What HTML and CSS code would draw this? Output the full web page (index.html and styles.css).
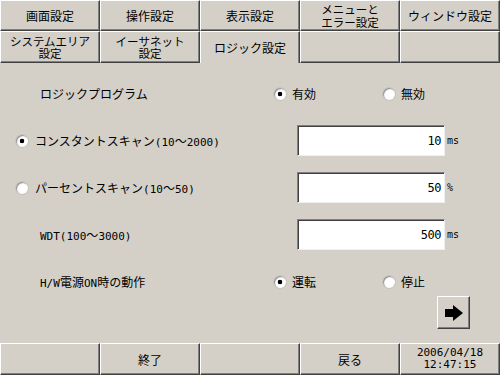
FILE: index.html
```html
<!DOCTYPE html>
<html lang="ja">
<head>
    <meta charset="UTF-8">
    <title>ロジック設定</title>
    <link rel="stylesheet" href="styles.css">
</head>
<body>
    <div class="screen">
        <div class="tabs">
            <div class="tab">画面設定</div>
            <div class="tab">操作設定</div>
            <div class="tab">表示設定</div>
            <div class="tab two">メニューと<br>エラー設定</div>
            <div class="tab">ウィンドウ設定</div>
            <div class="tab two">システムエリア<br>設定</div>
            <div class="tab two">イーサネット<br>設定</div>
            <div class="tab active">ロジック設定</div>
            <div class="tab"></div>
            <div class="tab"></div>
        </div>

        <div class="panel">
            <div class="rows">
                <div class="row">
                    <div class="label plain">ロジックプログラム</div>
                    <div class="opt"><span class="radio on"></span>有効</div>
                    <div class="opt"><span class="radio"></span>無効</div>
                </div>
                <div class="row field">
                    <div class="label"><span class="radio on"></span><span>コンスタントスキャン<span class="en">(10</span>～<span class="en">2000)</span></span></div>
                    <div class="box">10</div>
                    <span class="unit">ms</span>
                </div>
                <div class="row field">
                    <div class="label"><span class="radio"></span><span>パーセントスキャン<span class="en">(10</span>～<span class="en">50)</span></span></div>
                    <div class="box">50</div>
                    <span class="unit">%</span>
                </div>
                <div class="row field">
                    <div class="label plain"><span><span class="en">WDT(100</span>～<span class="en">3000)</span></span></div>
                    <div class="box">500</div>
                    <span class="unit">ms</span>
                </div>
                <div class="row">
                    <div class="label plain"><span><span class="en">H/W</span>電源<span class="en">ON</span>時の動作</span></div>
                    <div class="opt"><span class="radio on"></span>運転</div>
                    <div class="opt"><span class="radio"></span>停止</div>
                </div>
            </div>
            <div class="next">
                <button class="arrow">
                    <svg width="18" height="16" viewBox="0 0 18 16"><path d="M0 4H8V0L18 8L8 16V12H0Z" fill="#000"/></svg>
                </button>
            </div>
        </div>

        <div class="footer">
            <div class="tab"></div>
            <div class="tab">終了</div>
            <div class="tab"></div>
            <div class="tab">戻る</div>
            <div class="tab clock">2006/04/18<br>12:47:15</div>
        </div>
    </div>
</body>
</html>
```

FILE: styles.css
```css
body {
    margin: 0;
    background-color: #d4d0c8;
    font-family: "Noto Sans CJK JP", sans-serif;
    font-size: 12px;
    color: #000;
}

.screen {
    width: 500px;
    height: 375px;
    display: flex;
    flex-direction: column;
}

.tabs {
    display: grid;
    grid-template-columns: repeat(5, 100px);
    grid-template-rows: 31px 32px;
}

.tab {
    box-sizing: border-box;
    border: 1px solid;
    border-color: #fff #404040 #404040 #fff;
    box-shadow: inset -1px -1px 0 #808080;
    display: flex;
    align-items: center;
    justify-content: center;
    text-align: center;
    line-height: 13px;
}

.tab.two {
    font-size: 11.5px;
    line-height: 12.5px;
}

.tab.active {
    border-bottom: none;
    box-shadow: inset -1px 0 0 #808080;
}

.panel {
    height: 280px;
    box-sizing: border-box;
    padding: 15px 0 0 16px;
}

.rows {
    display: flex;
    flex-direction: column;
    gap: 16px;
}

.row {
    height: 31px;
    display: flex;
    align-items: center;
}

.label {
    width: 258px;
    box-sizing: border-box;
    display: flex;
    align-items: center;
    gap: 7px;
    white-space: nowrap;
}

.row.field .label {
    width: 281px;
}

.label.plain {
    padding-left: 24px;
}

.en {
    font-family: "DejaVu Sans Mono", monospace;
    font-size: 11px;
}

.opt {
    width: 109px;
    display: flex;
    align-items: center;
    gap: 6px;
}

.radio {
    flex: none;
    width: 12px;
    height: 12px;
    border-radius: 50%;
    background: #fff;
    box-shadow: inset 1px 1px 1px #8c8c8c, 0 0 0 1px #c8c4bc;
}

.radio.on {
    background: radial-gradient(circle, #000 0 2px, #fff 2.6px);
}

.box {
    width: 148px;
    height: 31px;
    box-sizing: border-box;
    background: #fff;
    border: 1px solid;
    border-color: #808080 #f0f0f0 #f0f0f0 #808080;
    box-shadow: inset 1px 1px 0 #404040;
    display: flex;
    align-items: center;
    justify-content: flex-end;
    padding-right: 3px;
    font-family: "DejaVu Sans Mono", monospace;
    font-size: 12px;
    letter-spacing: -0.5px;
}

.unit {
    margin-left: 2px;
    font-family: "DejaVu Sans Mono", monospace;
    font-size: 10px;
}

.next {
    display: flex;
    justify-content: flex-end;
    padding-right: 30px;
    margin-top: -1px;
}

.arrow {
    width: 33px;
    height: 33px;
    padding: 0;
    background: #d4d0c8;
    border: 1px solid;
    border-color: #fff #404040 #404040 #fff;
    box-shadow: inset -1px -1px 0 #808080;
    display: flex;
    align-items: center;
    justify-content: center;
}

.footer {
    display: grid;
    grid-template-columns: repeat(5, 100px);
    height: 32px;
}

.clock {
    font-family: "DejaVu Sans Mono", monospace;
    font-size: 11px;
    line-height: 12px;
}
```
